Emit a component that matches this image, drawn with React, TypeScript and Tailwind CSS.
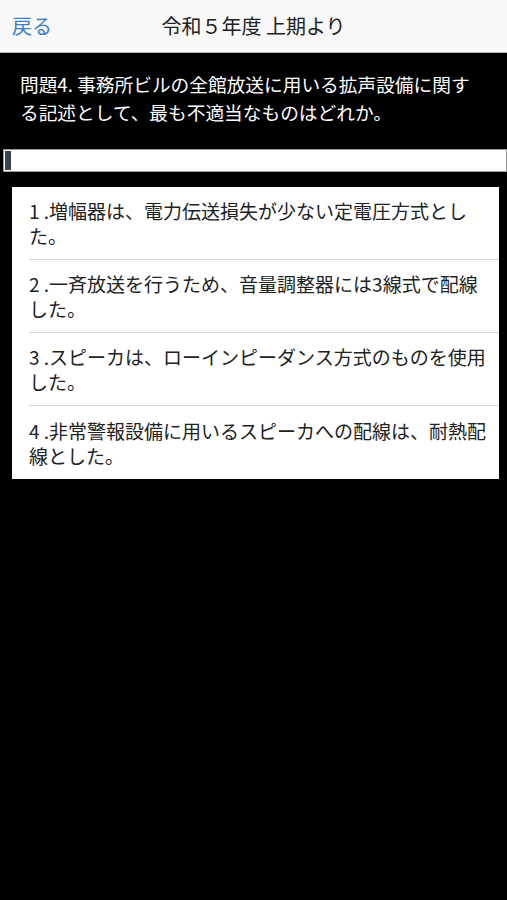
const options = [
  "1 .増幅器は、電力伝送損失が少ない定電圧方式とした。",
  "2 .一斉放送を行うため、音量調整器には3線式で配線した。",
  "3 .スピーカは、ローインピーダンス方式のものを使用した。",
  "4 .非常警報設備に用いるスピーカへの配線は、耐熱配線とした。",
];

export default function App() {
  return (
    <div
      className="w-full min-h-[900px] bg-black"
      style={{ fontFamily: '"Noto Sans CJK JP", "Noto Sans", sans-serif' }}
    >
      {/* Nav bar */}
      <div className="h-[53px] bg-[#f8f8f8] border-b border-[#b8b8b8] flex items-center relative">
        <button className="pl-[12px] text-[20px] text-[#3f7cc9]">戻る</button>
        <div className="absolute inset-x-0 text-center text-[20px] text-[#222] pointer-events-none">
          令和５年度 上期より
        </div>
      </div>

      {/* Question */}
      <div className="pl-[20px] pr-[28px] pt-[17px] text-white text-[18.7px] leading-[28px]">
        問題4. 事務所ビルの全館放送に用いる拡声設備に関する記述として、最も不適当なものはどれか。
      </div>

      {/* Progress */}
      <div className="mt-[23px] ml-[3px] h-[23px] bg-white border border-[#9a9a9a] flex items-center px-[1px]">
        <div className="w-[6px] h-[19px] bg-[#3a4350]" />
      </div>

      {/* Options */}
      <div className="mt-[15px] ml-[12px] mr-[8px] bg-white">
        {options.map((opt, i) => (
          <div key={i} className="pl-[17px]">
            <div
              className={`h-[73px] flex items-center pr-[8px] text-[19px] leading-[25px] text-[#222] ${
                i < options.length - 1 ? "border-b border-[#d6d6d6]" : ""
              }`}
            >
              {opt}
            </div>
          </div>
        ))}
      </div>
    </div>
  );
}
